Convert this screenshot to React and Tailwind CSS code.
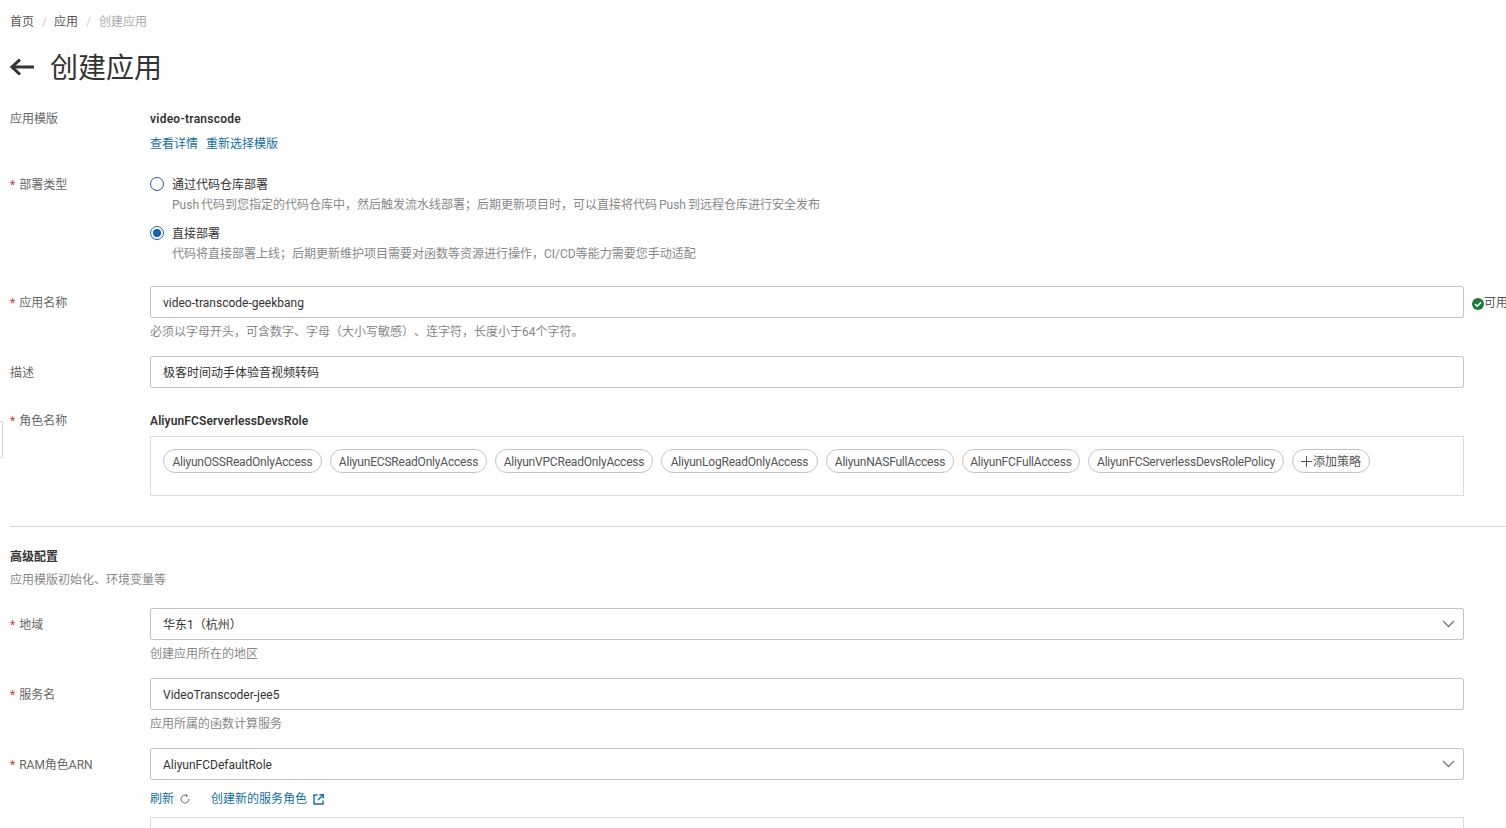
const FONT = "font-['Roboto','Noto_Sans_CJK_SC',sans-serif]";

const policies = [
  ['AliyunOSSReadOnlyAccess', 'w-[159px]'],
  ['AliyunECSReadOnlyAccess', 'w-[157px]'],
  ['AliyunVPCReadOnlyAccess', 'w-[158px]'],
  ['AliyunLogReadOnlyAccess', 'w-[157px]'],
  ['AliyunNASFullAccess', 'w-[128px]'],
  ['AliyunFCFullAccess', 'w-[118px]'],
  ['AliyunFCServerlessDevsRolePolicy', 'w-[196px]'],
];

function Label({ children, required, className = '' }) {
  return (
    <div className={`w-[140px] shrink-0 text-[#666] leading-5 ${className}`}>
      {required && <span className="text-[#c7402f] mr-[4px]">*</span>}
      {children}
    </div>
  );
}

function Field({ value, select }) {
  return (
    <div className="w-[1314px] h-8 border border-[#c4c4c4] rounded-[2px] bg-white flex items-center justify-between pl-3 pr-[8px] text-[#333]">
      <span className="pt-[2px]">{value}</span>
      {select && (
        <svg width="13" height="8" viewBox="0 0 13 8" fill="none" stroke="#777" strokeWidth="1.3">
          <path d="M1 1l5.5 5.5L12 1" />
        </svg>
      )}
    </div>
  );
}

function Radio({ checked }) {
  return (
    <span className="mb-[2px] w-[14px] h-[14px] rounded-full border border-[#2a5f8f] bg-white flex items-center justify-center shrink-0">
      {checked && <span className="w-2 h-2 rounded-full bg-[#0f62ad]" />}
    </span>
  );
}

function Hint({ children }) {
  return <div className="mt-[4px] leading-5 text-[#888]">{children}</div>;
}

export default function App() {
  return (
    <div className={`${FONT} [text-spacing-trim:space-all] relative h-[828px] w-[1506px] overflow-hidden bg-white pl-[10px] pt-[12px] text-[12px] text-[#333]`}>
      <div className="absolute left-0 top-[421px] h-[37px] w-[3px] rounded-r-[2px] border border-l-0 border-[#d5d5d5] bg-white" />

      <nav className="flex h-5 items-center leading-5 text-[#555]">
        <span>首页</span>
        <span className="ml-2 mr-[7px] text-[#ccc]">/</span>
        <span>应用</span>
        <span className="mx-2 text-[#ccc]">/</span>
        <span className="text-[#aaa]">创建应用</span>
      </nav>

      <div className="mt-[15px] flex h-10 items-center">
        <svg width="24" height="18" viewBox="0 0 24 18" fill="none" stroke="#333" strokeWidth="3">
          <path d="M24 9H2" />
          <path d="M10 1.5 2 9l8 7.5" />
        </svg>
        <h1 className="ml-[16px] pt-1 text-[28px] leading-10 font-normal text-[#333]">创建应用</h1>
      </div>

      <div className="mt-[22px] flex">
        <Label>应用模版</Label>
        <div>
          <div className="font-semibold leading-5 tracking-[0.25px]">video-transcode</div>
          <div className="mt-[5px] flex gap-2 leading-5 text-[#11709f]">
            <span>查看详情</span>
            <span>重新选择模版</span>
          </div>
        </div>
      </div>

      <div className="mt-[21px] flex">
        <Label required>部署类型</Label>
        <div>
          <div className="flex items-center gap-2 leading-5">
            <Radio />
            <span>通过代码仓库部署</span>
          </div>
          <div className="pl-[22px] leading-5 text-[#888] [word-spacing:-1px]">
            Push 代码到您指定的代码仓库中，然后触发流水线部署；后期更新项目时，可以直接将代码 Push 到远程仓库进行安全发布
          </div>
          <div className="mt-[9px] flex items-center gap-2 leading-5">
            <Radio checked />
            <span>直接部署</span>
          </div>
          <div className="pl-[22px] leading-5 text-[#888]">
            代码将直接部署上线；后期更新维护项目需要对函数等资源进行操作，CI/CD等能力需要您手动适配
          </div>
        </div>
      </div>

      <div className="mt-[22px] flex">
        <Label required className="pt-[7px]">应用名称</Label>
        <div>
          <Field value="video-transcode-geekbang" />
          <Hint>必须以字母开头，可含数字、字母（大小写敏感）、连字符，长度小于64个字符。</Hint>
        </div>
        <div className="ml-2 flex h-8 items-center whitespace-nowrap text-[#555]">
          <svg width="12" height="12" viewBox="0 0 12 12" className="mt-[3px]">
            <circle cx="6" cy="6" r="6" fill="#1a7a37" />
            <path d="M3 6.2 5.2 8.2 9 4.2" fill="none" stroke="#fff" strokeWidth="1.6" />
          </svg>
          <span className="pt-[2px]">可用</span>
        </div>
      </div>

      <div className="mt-[14px] flex">
        <Label className="pt-[7px]">描述</Label>
        <Field value="极客时间动手体验音视频转码" />
      </div>

      <div className="mt-[23px] flex">
        <Label required>角色名称</Label>
        <div>
          <div className="font-semibold leading-5 tracking-[0.12px]">AliyunFCServerlessDevsRole</div>
          <div className="mt-[5px] flex h-[60px] w-[1314px] items-start gap-2 border border-[#dcdcdc] pl-3 pt-3">
            {policies.map(([name, width]) => (
              <span key={name} className={`${width} flex h-6 shrink-0 items-center justify-center whitespace-nowrap rounded-full border border-[#c4c4c4] pt-[2px] tracking-[-0.2px] text-[#555]`}>
                {name}
              </span>
            ))}
            <span className="flex h-6 w-[78px] shrink-0 items-center justify-center gap-px whitespace-nowrap rounded-full border border-[#c4c4c4] text-[#555]">
              <svg width="11" height="11" viewBox="0 0 11 11" stroke="#555" strokeWidth="1">
                <path d="M5.5 0v11M0 5.5h11" />
              </svg>
              <span className="pt-[2px]">添加策略</span>
            </span>
          </div>
        </div>
      </div>

      <div className="mt-[30px] h-px bg-[#d5d5d5]" />

      <div className="mt-5 font-semibold leading-5">高级配置</div>
      <div className="mt-[3px] leading-5 text-[#888]">应用模版初始化、环境变量等</div>

      <div className="mt-[18px] flex">
        <Label required className="pt-[7px]">地域</Label>
        <div>
          <Field value="华东1（杭州）" select />
          <Hint>创建应用所在的地区</Hint>
        </div>
      </div>

      <div className="mt-[14px] flex">
        <Label required className="pt-[7px]">服务名</Label>
        <div>
          <Field value="VideoTranscoder-jee5" />
          <Hint>应用所属的函数计算服务</Hint>
        </div>
      </div>

      <div className="mt-[14px] flex">
        <Label required className="pt-[7px]">RAM角色ARN</Label>
        <div>
          <Field value="AliyunFCDefaultRole" select />
          <div className="mt-[9px] flex h-5 items-center text-[#11709f]">
            <span>刷新</span>
            <svg width="10" height="10" viewBox="0 0 10 10" fill="none" stroke="#666" strokeWidth="1" className="ml-[6px]">
              <path d="M7 1.6A4 4 0 1 0 9 5" />
              <path d="M5.6 0.4 7.4 1.6 6 3.2" />
            </svg>
            <span className="ml-[21px]">创建新的服务角色</span>
            <svg width="11" height="11" viewBox="0 0 11 11" fill="none" stroke="#11709f" strokeWidth="1.4" className="ml-[6px]">
              <path d="M4.5 1H1v9h9V6.5" />
              <path d="M6.5 0.8h3.7v3.7" />
              <path d="M10 1 5 6" />
            </svg>
          </div>
          <div className="mt-2 h-[60px] w-[1314px] border border-[#dcdcdc]" />
        </div>
      </div>
    </div>
  );
}
